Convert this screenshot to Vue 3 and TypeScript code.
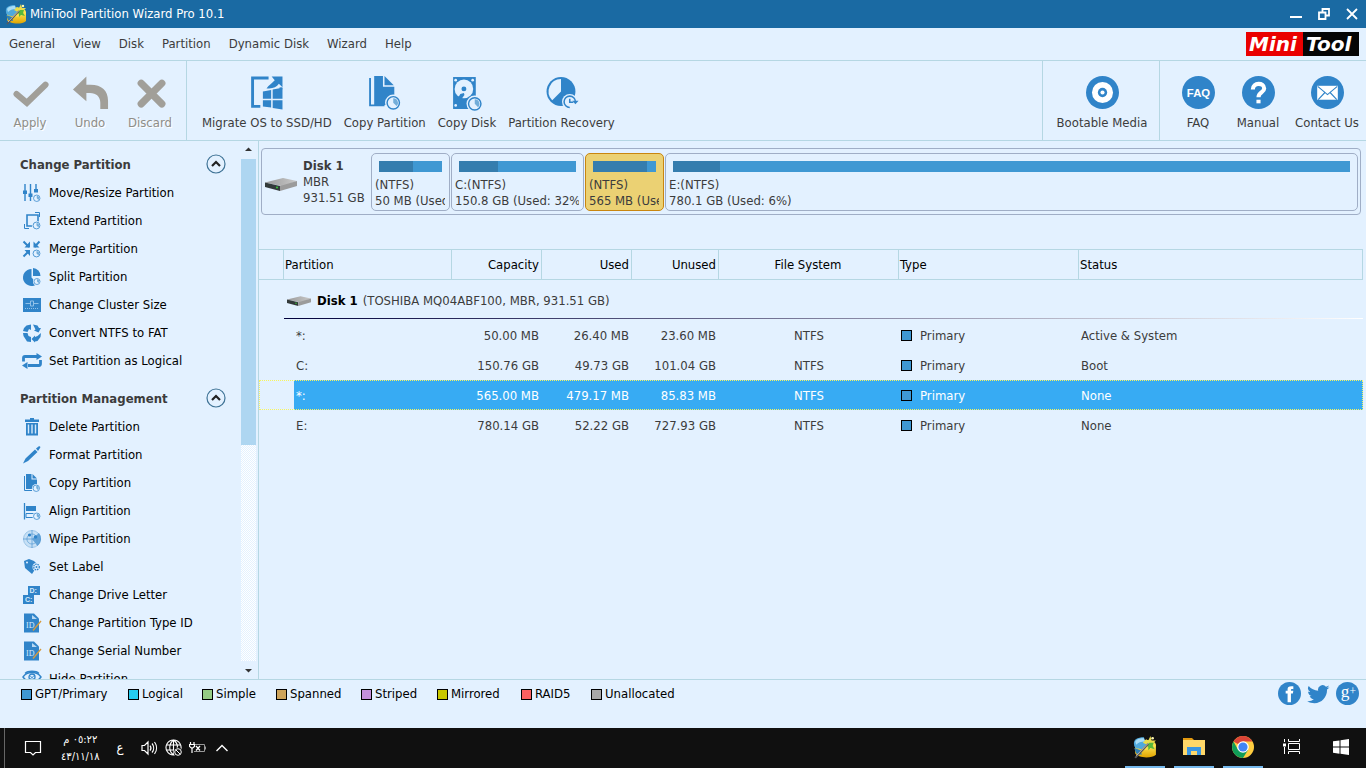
<script setup lang="ts">
import { ref } from 'vue'

interface Tool { id: string; label: string }
interface Part { name: string; size: string; used: number; kind: string; selected?: boolean }
interface Row { name: string; capacity: string; used: string; unused: string; status: string; selected?: boolean }
interface Group { title: string; items: Tool[] }

const menus: string[] = ['General', 'View', 'Disk', 'Partition', 'Dynamic Disk', 'Wizard', 'Help']

const editTools: Tool[] = [
  { id: 'apply', label: 'Apply' },
  { id: 'undo', label: 'Undo' },
  { id: 'discard', label: 'Discard' },
]
const diskTools: Tool[] = [
  { id: 'migrate', label: 'Migrate OS to SSD/HD' },
  { id: 'copypart', label: 'Copy Partition' },
  { id: 'copydisk', label: 'Copy Disk' },
  { id: 'recovery', label: 'Partition Recovery' },
]
const helpTools: Tool[] = [
  { id: 'faq', label: 'FAQ' },
  { id: 'manual', label: 'Manual' },
  { id: 'contact', label: 'Contact Us' },
]

const groups: Group[] = [
  {
    title: 'Change Partition',
    items: [
      { id: 'move', label: 'Move/Resize Partition' },
      { id: 'extend', label: 'Extend Partition' },
      { id: 'merge', label: 'Merge Partition' },
      { id: 'split', label: 'Split Partition' },
      { id: 'cluster', label: 'Change Cluster Size' },
      { id: 'convert', label: 'Convert NTFS to FAT' },
      { id: 'logical', label: 'Set Partition as Logical' },
    ],
  },
  {
    title: 'Partition Management',
    items: [
      { id: 'delete', label: 'Delete Partition' },
      { id: 'format', label: 'Format Partition' },
      { id: 'copysmall', label: 'Copy Partition' },
      { id: 'align', label: 'Align Partition' },
      { id: 'wipe', label: 'Wipe Partition' },
      { id: 'label', label: 'Set Label' },
      { id: 'letter', label: 'Change Drive Letter' },
      { id: 'typeid', label: 'Change Partition Type ID' },
      { id: 'typeid', label: 'Change Serial Number' },
      { id: 'hide', label: 'Hide Partition' },
    ],
  },
]

const parts: Part[] = [
  { name: '(NTFS)', size: '50 MB (Used: 53%)', used: 54, kind: 'small' },
  { name: 'C:(NTFS)', size: '150.8 GB (Used: 32%)', used: 33, kind: 'medium' },
  { name: '(NTFS)', size: '565 MB (Used: 85%)', used: 86, kind: 'small', selected: true },
  { name: 'E:(NTFS)', size: '780.1 GB (Used: 6%)', used: 7, kind: 'large' },
]

const rows = ref<Row[]>([
  { name: '*:', capacity: '50.00 MB', used: '26.40 MB', unused: '23.60 MB', status: 'Active & System' },
  { name: 'C:', capacity: '150.76 GB', used: '49.73 GB', unused: '101.04 GB', status: 'Boot' },
  { name: '*:', capacity: '565.00 MB', used: '479.17 MB', unused: '85.83 MB', status: 'None', selected: true },
  { name: 'E:', capacity: '780.14 GB', used: '52.22 GB', unused: '727.93 GB', status: 'None' },
])

const legend = [
  { id: 'primary', label: 'GPT/Primary' },
  { id: 'logical', label: 'Logical' },
  { id: 'simple', label: 'Simple' },
  { id: 'spanned', label: 'Spanned' },
  { id: 'striped', label: 'Striped' },
  { id: 'mirrored', label: 'Mirrored' },
  { id: 'raid', label: 'RAID5' },
  { id: 'unallocated', label: 'Unallocated' },
]
</script>

<template>
  <div class="screen">
    <svg class="sprite" width="0" height="0" aria-hidden="true">
      <defs>
        <linearGradient id="gold" x1="0" y1="0" x2="0" y2="1">
          <stop offset="0" stop-color="#ffe95a" /><stop offset="1" stop-color="#e0a400" />
        </linearGradient>
        <linearGradient id="metal" x1="0" y1="0" x2="1" y2="0">
          <stop offset="0" stop-color="#9a9a9a" /><stop offset="1" stop-color="#c8c8c8" />
        </linearGradient>
        <symbol id="i-app" viewBox="0 0 22 22">
          <path d="M2 9v8c2 4 15 5 19 1V9z" fill="url(#gold)" />
          <ellipse cx="11.500" cy="9" rx="9.500" ry="4.500" fill="#ffe34d" />
          <path d="M1 9C0 4 4 2 10 2l2 7-4 4C4 13 1 12 1 9z" fill="#4fa9dd" />
          <path d="M2 6c2-3 5-3 8-3l1 3C7 6 5 7 3 9z" fill="#a8dcf5" />
          <path d="M1 12l6 2 1 4-5-1z" fill="#2e7fb5" />
          <path d="M12 4l2 1 2-4 1 4 4 0-3 3 2 4-4-2-3 3v-4l-4-2z" fill="#e9dc4a" />
          <path d="M12 9l3-2 4 0-1 3 2 3-4-1-2 2v-3z" fill="#58b93c" />
          <path d="M2 21L14 8" stroke="#5a5a5a" stroke-width="1.800" />
          <path d="M3 19L14 7.500" stroke="#d8d8d8" stroke-width=".7" />
          <circle cx="18" cy="3" r="1.200" fill="#fff7b0" />
        </symbol>
        <symbol id="i-apply" viewBox="0 0 32 32" overflow="visible">
          <path d="M2.500 17.500l10 8.500L30.500 8.500" fill="none" stroke="#a19f99" stroke-width="6" stroke-linecap="round" />
        </symbol>
        <symbol id="i-undo" viewBox="0 0 32 32" overflow="visible">
          <path d="M-1 13L12 .5v8h4c11 0 17 6 17 15.500v8h-7.500v-6c0-6-4-9.500-10-9.500H12v8z" fill="#a19f99" />
        </symbol>
        <symbol id="i-discard" viewBox="0 0 32 32" overflow="visible">
          <path d="M7 7l20 20M27 7L7 27" stroke="#a19f99" stroke-width="7" stroke-linecap="round" />
        </symbol>
        <symbol id="i-migrate" viewBox="0 0 32 32" overflow="visible">
          <path d="M18 2H2.500V29.500h7.500" fill="none" stroke="#3084c9" stroke-width="2.800" />
          <path d="M30 11v2" stroke="#3084c9" stroke-width="2.600" />
          <g fill="#3084c9">
            <path d="M21 .5h10.500v10.500L28 7.500c-2 3-5 4.500-9.500 4.500h-2.500c2-3 5-5 8-8z" />
            <path d="M12.500 15l8-1.500v8.500h-8zM22 13.200l9.500-1.700v10.500H22zM12.500 23.500h8v7l-8-1zM22 23.500h9.500v9l-9.500-1.500z" />
          </g>
        </symbol>
        <symbol id="i-badge" viewBox="0 0 14 14" overflow="visible">
          <circle cx="7" cy="7" r="8" fill="#e3f1ff" />
          <circle cx="7" cy="7" r="6" fill="#e3f1ff" stroke="#3084c9" stroke-width="1.400" />
          <path d="M7 7V2.500a4.500 4.500 0 0 1 3.200 7.700z" fill="#72add9" />
        </symbol>
        <symbol id="i-copypart" viewBox="0 0 32 32" overflow="visible">
          <path d="M2 2v26.500h14" fill="none" stroke="#3084c9" stroke-width="1.800" />
          <path d="M6 0h8.500v10.500H25.500V28H6z" fill="#3084c9" />
          <path d="M16 0l9 9h-9z" fill="#3084c9" />
          <use href="#i-badge" x="17.500" y="19" width="14" height="14" />
        </symbol>
        <symbol id="i-copydisk" viewBox="0 0 32 32" overflow="visible">
          <rect x="3" y="1" width="22" height="31" fill="#3084c9" />
          <circle cx="13.500" cy="12.500" r="9" fill="#e3f1ff" />
          <circle cx="13.500" cy="12.500" r="2.400" fill="#3084c9" />
          <path d="M7 22.500l3-5 3.500-1 .5 2-3 4z" fill="#3084c9" />
          <g fill="#e3f1ff"><circle cx="5.500" cy="4" r="1.300" /><circle cx="22" cy="4" r="1.300" /><circle cx="5.500" cy="28.500" r="1.300" /></g>
          <use href="#i-badge" x="17" y="20" width="14" height="14" />
        </symbol>
        <symbol id="i-recovery" viewBox="0 0 32 32" overflow="visible">
          <circle cx="15.500" cy="15" r="14" fill="#3084c9" />
          <path d="M15.500 3V15L7 23.500A12 12 0 0 1 15.500 3z" fill="#e3f1ff" />
          <circle cx="24" cy="25" r="7.500" fill="#e3f1ff" />
          <path d="M29.500 25a5.500 5.500 0 1 0-5.500 5.500M24 22v3.500h3.500" fill="none" stroke="#3084c9" stroke-width="1.500" />
          <path d="M26.500 24h6l-3 3.500z" fill="#3084c9" />
        </symbol>
        <symbol id="i-media" viewBox="0 0 32 32">
          <circle cx="16" cy="16" r="16" fill="#3084c9" /><circle cx="16" cy="16" r="10.200" fill="#fff" />
          <circle cx="16" cy="16" r="4.500" fill="#3084c9" /><circle cx="16" cy="16" r="2" fill="#fff" />
        </symbol>
        <symbol id="i-faq" viewBox="0 0 32 32">
          <circle cx="16" cy="16" r="16" fill="#3084c9" />
          <text x="16" y="20" text-anchor="middle" font-family="Liberation Sans, sans-serif" font-size="11" font-weight="700" fill="#fff">FAQ</text>
        </symbol>
        <symbol id="i-manual" viewBox="0 0 32 32">
          <circle cx="16" cy="16" r="16" fill="#3084c9" />
          <path d="M10.500 13c0-7 11-7 11-1 0 4-5.500 4-5.500 8.500" fill="none" stroke="#fff" stroke-width="4" />
          <rect x="14" y="23" width="4" height="3.500" fill="#fff" />
        </symbol>
        <symbol id="i-contact" viewBox="0 0 32 32">
          <circle cx="16" cy="16" r="16" fill="#3084c9" /><rect x="6" y="9.500" width="20" height="13.500" fill="#fff" />
          <path d="M6.500 10l9.500 8 9.500-8M7 23l6.500-7M25 23l-6.500-7" fill="none" stroke="#3084c9" stroke-width="1.100" />
        </symbol>
        <symbol id="i-move" viewBox="0 0 18 18" overflow="visible">
          <path d="M2 0v17M7.500 0v17M13 0v8" stroke="#3084c9" stroke-width="1.400" />
          <path d="M0 6.500h4v3.500H0zM5.500 9.500h4v3.500h-4zM11 5h4v3.500h-4z" fill="#3084c9" />
          <use href="#i-badge" x="10" y="10.500" width="7.500" height="7.500" />
        </symbol>
        <symbol id="i-extend" viewBox="0 0 18 18" overflow="visible">
          <path d="M4 3h11v11H4z" fill="none" stroke="#3084c9" stroke-width="1.600" />
          <path d="M12 .5H16.500V5M1.500 12V16.500H6" fill="none" stroke="#3084c9" />
          <use href="#i-badge" x="9.500" y="9.500" width="8" height="8" />
        </symbol>
        <symbol id="i-merge" viewBox="0 0 18 18" overflow="visible">
          <path d="M.5 1.500l5.500 5.500M16.500 1.500l-5 5.500M.5 16.500l5.500-5.500" stroke="#3084c9" stroke-width="2" />
          <path d="M7 1.500v6H1.500zM10.500 1.500v6h6zM1.500 10h5.500v6z" fill="#3084c9" />
          <use href="#i-badge" x="9.500" y="9.500" width="8" height="8" />
        </symbol>
        <symbol id="i-split" viewBox="0 0 18 18" overflow="visible">
          <path d="M8.500 1v8.500l6 6A8.500 8.500 0 1 1 8.500 1z" fill="#3084c9" />
          <path d="M10 0a8 8 0 0 1 7.500 8H10z" fill="#3084c9" />
          <use href="#i-badge" x="10.500" y="10" width="7" height="7" />
        </symbol>
        <symbol id="i-cluster" viewBox="0 0 18 18" overflow="visible">
          <rect y="2" width="18" height="14" fill="#3084c9" />
          <path d="M2.500 7.500H7M11 7.500h4.500M7.500 5h3v5h-3z" fill="none" stroke="#8fc0e8" />
          <path d="M2 12.500h14" stroke="#8fc0e8" stroke-dasharray="1 1" />
        </symbol>
        <symbol id="i-convert" viewBox="0 0 18 18" overflow="visible">
          <path d="M3.500 1.500L8 .5v5.500L6 5 4.500 8 0 7l1-3zM10 .5l4.500 1 1.500 2.500 2 0-2.500 4.500L11 6.500l1.500-1zM0 9l4.500 0 1 3 2.500 1v5l-4-.5L.5 12zM18 9l-.5 4-3 4-2.500 .5V18.500L8.500 15l3.500-3.500v1.500l2.500-1z" fill="#3084c9" />
        </symbol>
        <symbol id="i-logical" viewBox="0 0 18 18" overflow="visible">
          <path d="M.5 9.500V6Q.5 4.500 2 4.500H14M17.500 8V11.500Q17.500 13.500 16 13.500H5" fill="none" stroke="#3084c9" stroke-width="2.800" />
          <path d="M13.500 1L19 4.500 13.500 8zM4.500 10L-1 13.500 4.500 17z" fill="#3084c9" />
        </symbol>
        <symbol id="i-delete" viewBox="0 0 18 18" overflow="visible">
          <path d="M2 1.500h5V0h4v1.500h5v2.500H2zM3 5h12v12.500H3z" fill="#3084c9" />
          <path d="M5.500 6.500v9M9 6.500v9M12.500 6.500v9" stroke="#d6eafb" stroke-width="1.400" />
        </symbol>
        <symbol id="i-format" viewBox="0 0 18 18" overflow="visible">
          <path d="M0 17.500l2.500-5L12 3.500l2.500 2.500-9.500 9zM13 2.500L15.500 .5c1.500-1 2.500.5 1.500 1.500L15 5z" fill="#3084c9" />
        </symbol>
        <symbol id="i-copysmall" viewBox="0 0 18 18" overflow="visible">
          <path d="M1.500 2v14.500H9" fill="none" stroke="#3084c9" />
          <path d="M3 0h5.500v5.500H14V15H3zM9.500 0L14 4.500H9.500z" fill="#3084c9" />
          <use href="#i-badge" x="9.500" y="10.500" width="7.500" height="7.500" />
        </symbol>
        <symbol id="i-align" viewBox="0 0 18 18" overflow="visible">
          <path d="M1.500 1v16.500" stroke="#3084c9" stroke-width="1.300" />
          <path d="M3 4h10v5H3z" fill="#3084c9" />
          <path d="M3 11.500h12v4H3z" fill="none" stroke="#3084c9" />
          <use href="#i-badge" x="10" y="10.500" width="7.500" height="7.500" />
        </symbol>
        <symbol id="i-wipe" viewBox="0 0 18 18" overflow="visible">
          <circle cx="9" cy="9" r="8.500" fill="#c7e0f5" stroke="#8ebce2" stroke-width=".8" />
          <path d="M9 9L16 3a9 9 0 0 1-1.500 13z" fill="#3084c9" opacity=".65" />
          <path d="M9 0v18M0 9h18M9 4a5 5 0 1 1-.1 0" fill="none" stroke="#5d9fd6" stroke-width=".8" />
          <circle cx="6.500" cy="5" r="1.600" fill="#3084c9" /><circle cx="12.500" cy="7" r="1.800" fill="#3084c9" />
        </symbol>
        <symbol id="i-label" viewBox="0 0 18 18" overflow="visible">
          <path d="M1 3l5-2 5 2 4 4-6 9-7-6z" fill="#3084c9" /><circle cx="4" cy="4.500" r="1" fill="#e3f1ff" />
          <circle cx="13.500" cy="9" r="4" fill="#e3f1ff" /><circle cx="13.500" cy="9" r="2.800" fill="none" stroke="#3084c9" stroke-width="1.300" stroke-dasharray="1.500 .8" /><circle cx="13.500" cy="9" r="1" fill="#3084c9" />
        </symbol>
        <symbol id="i-letter" viewBox="0 0 18 18" overflow="visible">
          <path d="M5 0h12v9H11v9H0V9h5z" fill="#3084c9" />
          <g font-family="Liberation Sans, sans-serif" font-size="7" font-weight="700" fill="#d6eafb"><text x="6.500" y="7">D:</text><text x="2" y="16">C:</text></g>
        </symbol>
        <symbol id="i-typeid" viewBox="0 0 18 18" overflow="visible">
          <path d="M1-.5h10l5 5V18.500H1z" fill="#3084c9" /><path d="M9 1v4h5z" fill="#b9d9f3" />
          <text x="3" y="14" font-family="Liberation Serif, serif" font-size="8" fill="#d6eafb">ID</text>
          <path d="M10 16.500L18 7" stroke="#d79b3c" stroke-width="1.300" />
        </symbol>
        <symbol id="i-hide" viewBox="0 0 18 18" overflow="visible">
          <path d="M0 7c4-6 14-6 18 0-4 6-14 6-18 0z" fill="#e3f1ff" stroke="#3084c9" stroke-width="1.400" />
          <path d="M2 3.500c3-3 11-3 14 0" fill="none" stroke="#3084c9" stroke-width="1.300" />
          <circle cx="9" cy="7" r="3" fill="none" stroke="#3084c9" stroke-width="1.300" /><path d="M6 5l6 5M12 5l-6 5" stroke="#3084c9" stroke-width=".8" />
        </symbol>
        <symbol id="i-drive" viewBox="0 0 32 13">
          <path d="M0 4.500L18 0l14 3-13.500 5.500z" fill="url(#metal)" />
          <path d="M0 4.500l15 3.500v5L0 9z" fill="#333a3a" /><path d="M15 8l17-5v5l-17 5z" fill="#9b9b9b" />
          <circle cx="12" cy="9.500" r="1" fill="#38c838" />
        </symbol>
        <symbol id="i-fb" viewBox="0 0 24 24">
          <circle cx="12" cy="12" r="12" fill="#3084c9" />
          <path d="M10 21v-9H8V9h2V7.500C10 5 11.500 4 16 4.500V7.500c-2-.3-2.500 0-2.500 1.500H16l-.5 3h-2v9z" fill="#fff" />
        </symbol>
        <symbol id="i-tw" viewBox="0 0 24 24">
          <path d="M23.500 5.500c-.8.400-1.800.7-2.700.8 1-.6 1.700-1.500 2-2.600-.9.600-1.900 1-3 1.200a4.700 4.700 0 0 0-8.100 4.300C7.700 9 4.200 7.100 1.800 4.200a4.700 4.700 0 0 0 1.500 6.300c-.8 0-1.500-.2-2.200-.6 0 2.300 1.600 4.200 3.800 4.700-.7.200-1.400.2-2.100.1.600 1.900 2.300 3.200 4.400 3.300A9.500 9.500 0 0 1 .2 20c11 6 21-2 20.700-12.100 1-.7 1.900-1.500 2.600-2.400z" fill="#3084c9" />
        </symbol>
        <symbol id="i-gp" viewBox="0 0 24 24">
          <circle cx="12" cy="12" r="12" fill="#3084c9" />
          <g font-family="Liberation Serif, serif" fill="#fff"><text x="5" y="16" font-size="18">g</text><text x="14" y="14" font-size="12">+</text></g>
        </symbol>
        <symbol id="i-explorer" viewBox="0 0 22 20">
          <path d="M0 1h9l2 2H0z" fill="#e39a10" /><path d="M0 3h22v15H0z" fill="#ffd869" /><path d="M4 18v-8h14v8h-4v-4H8v4z" fill="#3b97e3" />
        </symbol>
        <symbol id="i-chrome" viewBox="0 0 24 24">
          <circle cx="12" cy="12" r="11" fill="#ffcd40" />
          <path d="M12 12L2.500 6.500A11 11 0 0 1 21.500 6.500H12z" fill="#db4437" />
          <path d="M12 12l5 3-5 8A11 11 0 0 1 2.500 6.500L7 14.800z" fill="#0f9d58" />
          <circle cx="12" cy="12" r="5.800" fill="#fff" /><circle cx="12" cy="12" r="4.600" fill="#4285f4" />
        </symbol>
        <symbol id="i-taskview" viewBox="0 0 18 18">
          <path d="M1.500 1v3M1.500 9v7M5.500 1v2.500h11V1M5.500 16v-2.500h11V16M5.500 5.500h11v6h-11z" fill="none" stroke="#fff" /><path d="M0 5.500h3v3H0z" fill="#fff" />
        </symbol>
        <symbol id="i-win" viewBox="0 0 16 16">
          <path d="M0 2.300l6.500-.9v6.100H0zM7.500 1.200L16 0v7.500H7.500zM0 8.500h6.500v6.200L0 13.800zM7.500 8.500H16V16l-8.500-1.200z" fill="#fff" />
        </symbol>
      </defs>
    </svg>

    <header class="titlebar">
      <svg class="app-icon"><use href="#i-app" /></svg>
      <h1>MiniTool Partition Wizard Pro 10.1</h1>
      <div class="window-controls">
        <button type="button" aria-label="Minimize"><svg viewBox="0 0 12 12"><path d="M0 9h12" stroke="#fff" stroke-width="2" /></svg></button>
        <button type="button" aria-label="Restore"><svg viewBox="0 0 12 12"><path d="M1 4.500h6.500V11H1zM4.500 4V1H11v6.500H8" fill="none" stroke="#fff" stroke-width="1.800" /></svg></button>
        <button type="button" aria-label="Close"><svg viewBox="0 0 12 12"><path d="M1 1l10 10M11 1L1 11" stroke="#fff" stroke-width="1.800" /></svg></button>
      </div>
    </header>

    <nav class="menubar">
      <button v-for="m in menus" :key="m" type="button">{{ m }}</button>
      <a class="brand" href="#" aria-label="MiniTool"><span class="brand-mini">Mini</span><span class="brand-tool">Tool</span></a>
    </nav>

    <div class="toolbar">
      <div class="tools tools-edit">
        <button v-for="t in editTools" :key="t.id" type="button" disabled><svg><use :href="`#i-${t.id}`" /></svg>{{ t.label }}</button>
      </div>
      <div class="tools tools-disk">
        <button v-for="t in diskTools" :key="t.id" type="button"><svg><use :href="`#i-${t.id}`" /></svg>{{ t.label }}</button>
      </div>
      <div class="tools tools-media">
        <button type="button"><svg><use href="#i-media" /></svg>Bootable Media</button>
      </div>
      <div class="tools tools-help">
        <button v-for="t in helpTools" :key="t.id" type="button"><svg><use :href="`#i-${t.id}`" /></svg>{{ t.label }}</button>
      </div>
    </div>

    <div class="workspace">
      <aside class="sidebar">
        <div class="actions">
          <section v-for="g in groups" :key="g.title" class="group">
            <div class="group-head">
              <h2>{{ g.title }}</h2>
              <button type="button" :aria-label="`Collapse ${g.title}`"><svg viewBox="0 0 20 20"><circle cx="10" cy="10" r="9" fill="none" stroke="#3f7396" stroke-width="1.200" /><path d="M6 12l4-4 4 4" fill="none" stroke="#222" stroke-width="2.200" /></svg></button>
            </div>
            <button v-for="item in g.items" :key="item.label" type="button" class="action"><svg><use :href="`#i-${item.id}`" /></svg>{{ item.label }}</button>
          </section>
        </div>
        <div class="scrollbar" aria-hidden="true">
          <svg viewBox="0 0 15 18"><path d="M4 10l3.500-3.500L11 10z" fill="#333" /></svg>
          <div class="track"><div class="thumb"></div></div>
          <svg viewBox="0 0 15 18"><path d="M4 8l3.500 3.500L11 8z" fill="#333" /></svg>
        </div>
      </aside>

      <main class="content">
        <section class="diskmap">
          <svg class="drive"><use href="#i-drive" /></svg>
          <div class="disk-info"><strong>Disk 1</strong><span>MBR</span><span>931.51 GB</span></div>
          <button v-for="(p, i) in parts" :key="i" type="button" class="part" :class="[p.kind, { selected: p.selected }]">
            <span class="bar"><span class="fill" :style="{ width: p.used + '%' }"></span></span>
            <span class="part-name">{{ p.name }}</span>
            <span class="part-size">{{ p.size }}</span>
          </button>
        </section>

        <table class="partitions">
          <colgroup>
            <col class="c-gutter" /><col class="c-name" /><col class="c-size" /><col class="c-size" /><col class="c-unused" /><col class="c-wide" /><col class="c-wide" /><col />
          </colgroup>
          <thead>
            <tr>
              <th></th><th>Partition</th><th class="num">Capacity</th><th class="num">Used</th><th class="num">Unused</th><th class="mid">File System</th><th>Type</th><th>Status</th>
            </tr>
          </thead>
          <tbody>
            <tr class="disk-row">
              <td></td>
              <td colspan="7"><div class="disk-line"><svg><use href="#i-drive" /></svg><strong>Disk 1</strong><span>(TOSHIBA MQ04ABF100, MBR, 931.51 GB)</span></div></td>
            </tr>
            <tr v-for="(r, i) in rows" :key="i" :class="{ selected: r.selected }">
              <td></td>
              <td class="name">{{ r.name }}</td>
              <td class="num">{{ r.capacity }}</td>
              <td class="num">{{ r.used }}</td>
              <td class="num">{{ r.unused }}</td>
              <td class="mid">NTFS</td>
              <td class="type"><i class="swatch primary"></i>Primary</td>
              <td class="status">{{ r.status }}</td>
            </tr>
          </tbody>
        </table>
      </main>
    </div>

    <footer class="statusbar">
      <ul class="legend">
        <li v-for="l in legend" :key="l.id"><i class="swatch" :class="l.id"></i>{{ l.label }}</li>
      </ul>
      <div class="social">
        <a href="#" aria-label="Facebook"><svg><use href="#i-fb" /></svg></a>
        <a href="#" aria-label="Twitter"><svg><use href="#i-tw" /></svg></a>
        <a href="#" aria-label="Google Plus"><svg><use href="#i-gp" /></svg></a>
      </div>
    </footer>

    <div class="taskbar">
      <div class="tray">
        <button type="button" class="w-note" aria-label="Notifications"><svg width="18" height="18" viewBox="0 0 18 18"><path d="M1.500 2.500h15v11h-5L9 16l-2.500-2.500h-5z" fill="none" stroke="#fff" stroke-width="1.200" /></svg></button>
        <button type="button" class="clock"><span dir="rtl">٠٥:٢٢ م</span><span>٤٣/١١/١٨</span></button>
        <button type="button" class="w-lang">ع</button>
        <button type="button" class="w-tray" aria-label="Volume"><svg width="18" height="16" viewBox="0 0 18 16"><path d="M1 5.500h2.500L7 2v12l-3.500-3.500H1zM9 5.500a4 4 0 0 1 0 5M11 3.500a7 7 0 0 1 0 9M13.500 2a10 10 0 0 1 0 12" fill="none" stroke="#fff" stroke-width="1.200" /></svg></button>
        <button type="button" class="w-tray" aria-label="Network"><svg width="18" height="18" viewBox="0 0 18 18"><path d="M8.500 1a7.500 7.500 0 1 0 .1 0M8.500 1c-5 4-5 11 0 15M8.500 1c4 3 4.500 7 3 10M1.500 6h14M1.500 11H10M8.500 1v15" fill="none" stroke="#fff" stroke-width="1.100" /><circle cx="13" cy="13" r="4.500" fill="#101010" /><circle cx="13" cy="13" r="3.300" fill="none" stroke="#fff" /><path d="M11 11l4 4" stroke="#fff" /></svg></button>
        <button type="button" class="w-tray" aria-label="Battery"><svg width="18" height="16" viewBox="0 0 18 16"><path d="M6 4.500h9.500v7H5M16.500 6.500v3" fill="none" stroke="#999" /><path d="M1.500 2v2M5 2v2M.5 4.500h5v2L3 8.500.5 6.500zM3 8v5M7 6l4 4.500M11 6l-4 4.500" fill="none" stroke="#fff" stroke-width="1.200" /></svg></button>
        <button type="button" class="w-tray" aria-label="Show hidden icons"><svg width="12" height="8" viewBox="0 0 12 8"><path d="M.5 7L6 1.500 11.500 7" fill="none" stroke="#fff" stroke-width="1.400" /></svg></button>
      </div>
      <div class="tasks">
        <button type="button" class="open" aria-label="MiniTool Partition Wizard"><svg width="24" height="24"><use href="#i-app" /></svg></button>
        <button type="button" class="open" aria-label="File Explorer"><svg width="22" height="20"><use href="#i-explorer" /></svg></button>
        <button type="button" class="open" aria-label="Chrome"><svg width="24" height="24"><use href="#i-chrome" /></svg></button>
        <button type="button" aria-label="Task View"><svg width="18" height="18"><use href="#i-taskview" /></svg></button>
        <button type="button" aria-label="Start"><svg width="16" height="16"><use href="#i-win" /></svg></button>
      </div>
    </div>
  </div>
</template>

<style>
body { margin: 0; background: #e3f1ff; }
</style>

<style scoped>
* { box-sizing: border-box; }
.screen {
  display: flex; flex-direction: column; height: 100vh; overflow: hidden;
  background: #e3f1ff; color: #3c3c3c;
  font: 13px/16px "DejaVu Sans Condensed", "Noto Sans", sans-serif;
}
.sprite { position: absolute; }
button { border: 0; padding: 0; margin: 0; background: none; font: inherit; color: inherit; white-space: nowrap; }
svg { display: block; flex: none; }
h1, h2, ul { margin: 0; padding: 0; font: inherit; }

.titlebar { display: flex; align-items: center; flex: none; height: 28px; padding-left: 5px; background: #1a6aa3; color: #fff; }
.app-icon { width: 22px; height: 22px; margin-right: 3px; }
.window-controls { display: flex; margin-left: auto; }
.window-controls button { display: grid; place-items: center; width: 28px; height: 28px; }
.window-controls svg { width: 12px; height: 12px; }

.menubar { display: flex; align-items: center; gap: 18px; flex: none; height: 33px; padding: 0 7px 0 9px; border-bottom: 1px solid #b5d7e3; }
.brand { display: flex; margin-left: auto; height: 24px; font: italic 700 20px/24px "DejaVu Sans", sans-serif; color: #fff; text-decoration: none; }
.brand-mini { width: 57px; padding-left: 3px; background: #ea0000; }
.brand-tool { width: 56px; padding-left: 3px; background: #050505; }

.toolbar { display: flex; flex: none; height: 80px; border-bottom: 1px solid #b5d7e3; }
.tools { display: flex; padding-top: 15px; }
.tools button { display: flex; flex-direction: column; align-items: center; height: 56px; gap: 6px; }
.tools svg { width: 33px; height: 33px; overflow: visible; }
.tools-edit { width: 187px; border-right: 1px solid #b5d7e3; }
.tools-edit button { width: 60px; color: #8f8d88; text-shadow: 1px 1px #fff; }
.tools-disk { flex: 1; gap: 12px; padding-left: 15px; }
.tools-media { justify-content: center; width: 118px; padding-left: 2px; border: solid #b5d7e3; border-width: 0 1px; }
.tools-help { padding-left: 8px; }
.tools-help button { width: 60px; }
.tools-help button:last-child { width: 78px; }

.workspace { display: flex; flex: 1; min-height: 0; }
.sidebar { display: flex; flex: none; width: 258px; padding-right: 2px; }
.actions { flex: 1; overflow: hidden; padding: 10px 15px 0 20px; }
.group { margin-bottom: 10px; }
.group-head { display: flex; align-items: center; justify-content: space-between; height: 28px; }
.group-head h2 { font-weight: 700; }
.group-head button { padding-bottom: 2px; }
.group-head svg { width: 20px; height: 20px; }
.action { display: flex; align-items: center; gap: 8px; width: 100%; height: 28px; padding-left: 3px; color: #000; }
.action svg { width: 18px; height: 18px; overflow: visible; }
.scrollbar { display: flex; flex-direction: column; width: 15px; }
.scrollbar svg { width: 15px; height: 18px; }
.track { flex: 1; background: repeating-conic-gradient(#fff 0 25%, #e3f1ff 0 50%) 0 0 / 2px 2px; }
.thumb { height: 57%; background: #aed6f1; }

.content { flex: 1; min-width: 0; padding: 7px 3px 0 2px; border-left: 1px solid #b5d7e3; }
.diskmap { display: flex; align-items: flex-start; gap: 1px; height: 67px; margin-right: 2px; padding: 4px 2px 0 3px; border: 1px solid #a0aec6; border-radius: 4px; }
.drive { width: 32px; height: 13px; margin-top: 25px; }
.disk-info { display: flex; flex-direction: column; width: 72px; padding: 5px 0 0 5px; }
.part { display: flex; flex-direction: column; height: 58px; padding: 7px 4px 0 3px; overflow: hidden; text-align: left; border: 1px solid #a0aec6; border-radius: 5px; }
.small { width: 79px; }
.medium { width: 133px; }
.large { flex: 1; }
.part.selected { background: #ebd173; border-color: #c9860f; }
.bar { display: block; height: 11px; margin: 0 3px 5px 4px; background: #3f98d3; }
.fill { display: block; height: 100%; background: #357dae; }
.part-name, .part-size { display: block; height: 16px; overflow: hidden; }

.partitions { width: calc(100% + 2px); margin-top: 34px; margin-left: -2px; table-layout: fixed; border-collapse: separate; border-spacing: 0; }
.c-gutter { width: 25px; }
.c-name { width: 168px; }
.c-size { width: 90px; }
.c-unused { width: 87px; }
.c-wide { width: 180px; }
th, td { padding: 0 2px; text-align: left; font-weight: 400; }
th { height: 31px; border: solid #b5d7e3; border-width: 1px 1px 1px 0; color: #000; padding-left: 1px; }
td { height: 30px; padding-top: 2px; }
.num { text-align: right; padding-right: 3px; }
th.num { padding-right: 2px; }
.mid { text-align: center; }
.disk-row td { height: 40px; padding: 0; vertical-align: top; }
.disk-line { display: flex; align-items: center; height: 39px; padding: 4px 0 0 3px; border-bottom: 1px solid; border-image: linear-gradient(to right, #00003c, #fff) 1; }
.disk-line svg { width: 24px; height: 10px; margin-right: 6px; }
.disk-line strong { margin-right: 5px; color: #000; }
.partitions .name { padding-left: 12px; }
.type .swatch { display: inline-block; margin-right: 8px; vertical-align: -1px; }
tr.selected { color: #fff; outline: 1px dotted #f8f45c; outline-offset: -1px; }
tr.selected td { background: #37abf3; }
tr.selected td:first-child { background: none; }
tr.selected td.name { background: linear-gradient(to right, transparent 10px, #37abf3 10px); }

.swatch { flex: none; width: 11px; height: 11px; border: 1px solid #000; }
.primary { background: #3f98d3; }
.logical { background: #25cdf0; }
.simple { background: #95cc85; }
.spanned { background: #cda45c; }
.striped { background: #c590dc; }
.mirrored { background: #c9c800; }
.raid { background: #fa6060; }
.unallocated { background: #a8a8a8; }

.statusbar { display: flex; justify-content: space-between; flex: none; height: 49px; padding: 2px 7px 0 21px; border-top: 1px solid #b5d7e3; color: #000; }
.legend { display: grid; grid-template-columns: 107px 74px 74px 85px 76px 84px 70px auto; height: 24px; list-style: none; }
.legend li { display: flex; align-items: center; gap: 3px; white-space: nowrap; }
.social { display: flex; gap: 6px; }
.social svg { width: 23px; height: 23px; }

.taskbar { display: flex; justify-content: space-between; flex: none; height: 40px; background: #101010; color: #fff; }
.tray { display: flex; margin-left: 4px; border-left: 1px solid #666; }
.tray button { display: grid; place-items: center; }
.w-note { width: 56px; }
.tray .clock { width: 32px; align-content: center; font-size: 11px; line-height: 17px; }
.tray .w-lang { width: 36px; margin-left: 9px; }
.w-tray { width: 24px; }
.tasks { display: flex; padding-right: 1px; }
.tasks button { display: grid; place-items: center; width: 49px; border-bottom: 2px solid transparent; }
.tasks .open { background: linear-gradient(#76b9ed, #76b9ed) center bottom / 40px 2px no-repeat border-box; }
</style>
